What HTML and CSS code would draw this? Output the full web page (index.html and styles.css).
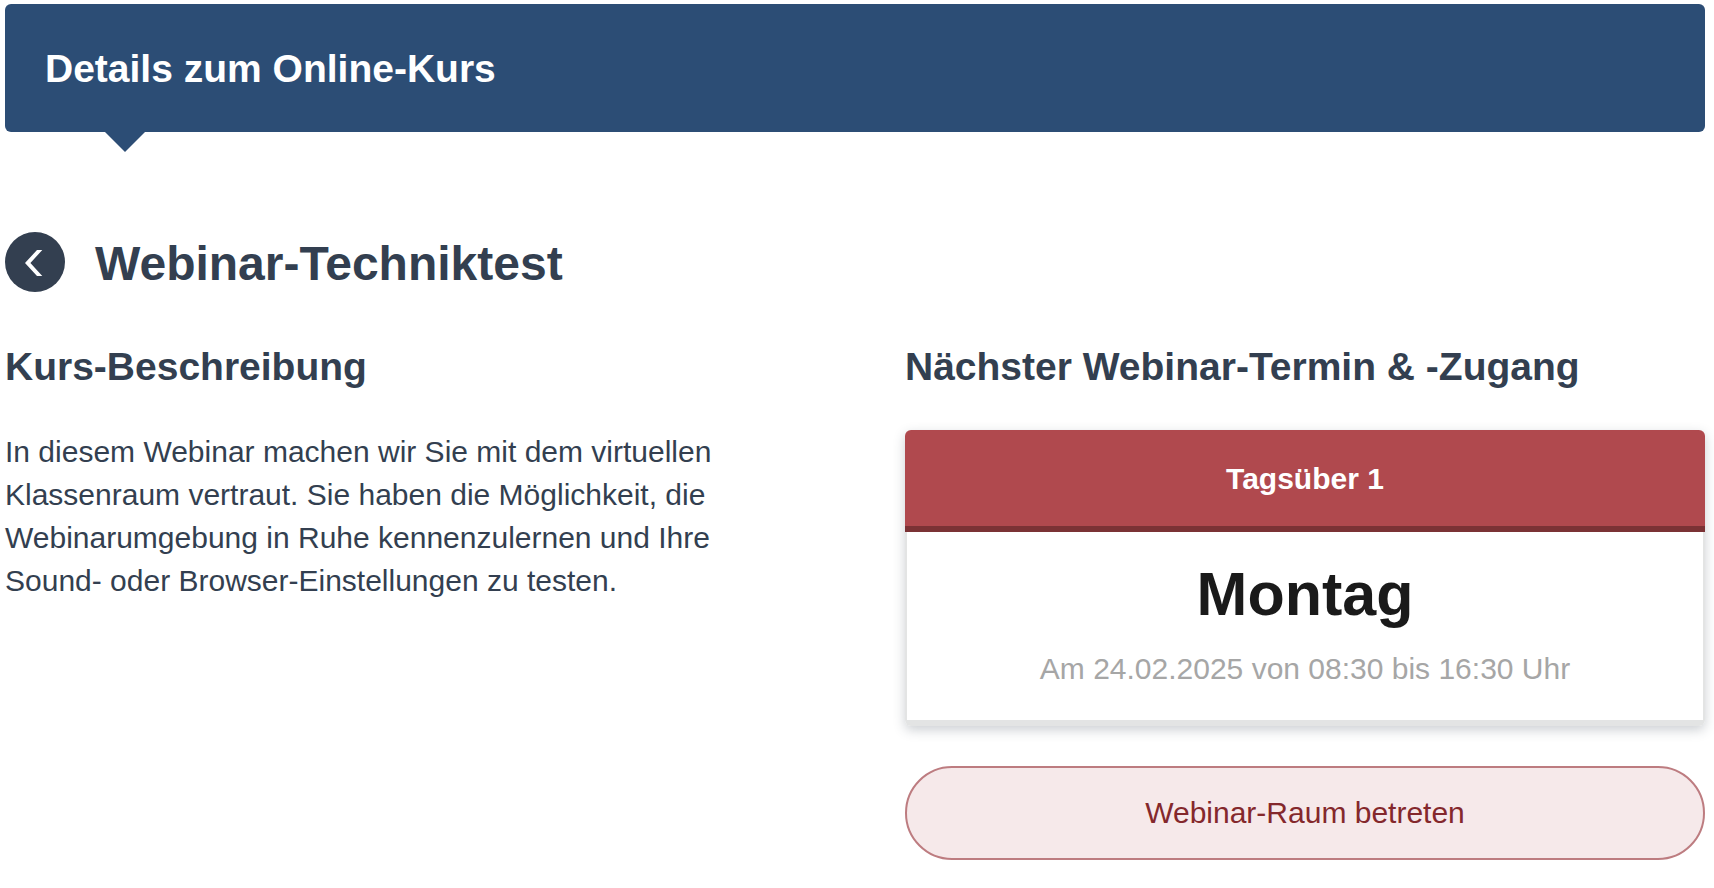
FILE: index.html
```html
<!DOCTYPE html>
<html lang="de">
<head>
    <meta charset="UTF-8">
    <meta name="viewport" content="width=device-width, initial-scale=1.0">
    <title>Details zum Online-Kurs</title>
    <link rel="stylesheet" href="styles.css">
</head>
<body>
    <header class="page-header">
        <h1>Details zum Online-Kurs</h1>
    </header>

    <main>
        <div class="course-title">
            <a href="#" class="back-link" aria-label="Zurück">
                <svg width="60" height="60" viewBox="0 0 60 60" aria-hidden="true">
                    <path d="M32 18H37.3L25.4 31L37.3 44H32L20 31Z" fill="#fff"/>
                </svg>
            </a>
            <h2>Webinar-Techniktest</h2>
        </div>

        <div class="columns">
            <section class="description">
                <h3>Kurs-Beschreibung</h3>
                <p>In diesem Webinar machen wir Sie mit dem virtuellen Klassenraum vertraut. Sie haben die Möglichkeit, die Webinarumgebung in Ruhe kennenzulernen und Ihre Sound- oder Browser-Einstellungen zu testen.</p>
            </section>

            <section class="next-date">
                <h3>Nächster Webinar-Termin &amp; -Zugang</h3>
                <div class="card">
                    <div class="card-header">Tagsüber 1</div>
                    <div class="card-body">
                        <div class="day">Montag</div>
                        <div class="time">Am 24.02.2025 von 08:30 bis 16:30 Uhr</div>
                    </div>
                </div>
                <button type="button" class="enter-button">Webinar-Raum betreten</button>
            </section>
        </div>
    </main>
</body>
</html>
```

FILE: styles.css
```css
* {
    box-sizing: border-box;
}
body {
    margin: 0;
    padding: 4px 9px 20px 5px;
    font-family: "Liberation Sans", Arial, sans-serif;
    font-size: 30px;
    line-height: 43px;
    color: #333f50;
    background-color: #fff;
}
h1, h2, h3, p {
    margin: 0;
}
.page-header {
    position: relative;
    padding: 41px 40px 39px;
    border-radius: 6px;
    background-color: #2c4d75;
    color: #fff;
}
.page-header::after {
    content: "";
    position: absolute;
    top: 100%;
    left: 100px;
    border: 20px solid transparent;
    border-top-color: #2c4d75;
    border-bottom: 0;
}
h1, h3 {
    font-size: 39px;
    line-height: 48px;
}
.course-title {
    display: flex;
    align-items: flex-start;
    gap: 30px;
    margin-top: 100px;
}
.back-link {
    width: 60px;
    height: 60px;
    border-radius: 50%;
    background-color: #333f50;
}
.back-link svg {
    display: block;
}
h2 {
    font-size: 48px;
    line-height: 64px;
}
.columns {
    display: grid;
    grid-template-columns: 1fr 1fr;
    gap: 100px;
    margin-top: 47px;
}
h3 {
    margin-bottom: 39px;
}
.card {
    border-radius: 6px;
    box-shadow: 0 4px 12px rgba(51, 63, 80, 0.25);
    text-align: center;
}
.card-header {
    padding: 27px 20px 26px;
    border-bottom: 6px solid #7b3235;
    border-radius: 6px 6px 0 0;
    background-color: #b0494e;
    color: #fff;
    font-weight: bold;
}
.card-body {
    padding: 25px 20px 30px;
    border: 2px solid #e3e4e4;
    border-width: 0 2px 6px;
    border-radius: 0 0 6px 6px;
    background-color: #fff;
}
.day {
    margin-bottom: 16px;
    font-size: 61px;
    font-weight: bold;
    line-height: 74px;
    color: #1a1a1a;
}
.time {
    color: #a6a6a6;
}
.enter-button {
    width: 100%;
    margin-top: 40px;
    padding: 24px 40px;
    border: 2px solid #bd7c80;
    border-radius: 47px;
    background-color: #f6e9ea;
    color: #84282c;
    font: inherit;
    line-height: 42px;
    cursor: pointer;
}
.enter-button:hover {
    background-color: #f0dcdd;
}
```
